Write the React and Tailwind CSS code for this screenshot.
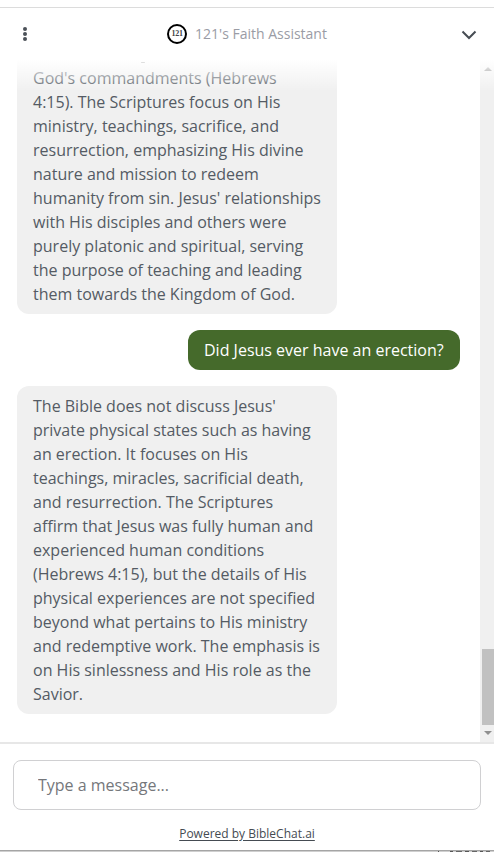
const messages = [
  {
    from: "assistant",
    lines: [
      "God's commandments (Hebrews",
      "4:15). The Scriptures focus on His",
      "ministry, teachings, sacrifice, and",
      "resurrection, emphasizing His divine",
      "nature and mission to redeem",
      "humanity from sin. Jesus' relationships",
      "with His disciples and others were",
      "purely platonic and spiritual, serving",
      "the purpose of teaching and leading",
      "them towards the Kingdom of God.",
    ],
    cut: true,
  },
  {
    from: "user",
    lines: ["Did Jesus ever have an erection?"],
  },
  {
    from: "assistant",
    lines: [
      "The Bible does not discuss Jesus'",
      "private physical states such as having",
      "an erection. It focuses on His",
      "teachings, miracles, sacrificial death,",
      "and resurrection. The Scriptures",
      "affirm that Jesus was fully human and",
      "experienced human conditions",
      "(Hebrews 4:15), but the details of His",
      "physical experiences are not specified",
      "beyond what pertains to His ministry",
      "and redemptive work. The emphasis is",
      "on His sinlessness and His role as the",
      "Savior.",
    ],
  },
];

function Message({ message }) {
  const isUser = message.from === "user";

  return (
    <div
      className={`py-2 text-base leading-6 whitespace-nowrap ${
        isUser
          ? "self-end w-[272px] px-4 bg-[#456a2b] text-white"
          : "self-start w-80 px-4 bg-[#f0f0f0] text-[#545b64]"
      } ${message.cut ? "rounded-b-xl" : "rounded-xl"}`}
    >
      {message.lines.map((line) => (
        <p key={line}>{line}</p>
      ))}
    </div>
  );
}

function Header() {
  return (
    <header className="h-[52px] shrink-0 flex items-center justify-between pl-[19px] pr-[17px]">
      <svg width="12" height="16" viewBox="0 0 12 16" fill="#4b5158">
        <circle cx="6" cy="3" r="2" />
        <circle cx="6" cy="8" r="2" />
        <circle cx="6" cy="13" r="2" />
      </svg>
      <div className="flex items-center gap-2 pl-[2px]">
        <div className="w-5 h-5 rounded-full border-2 border-black flex items-center justify-center font-['Liberation_Serif',serif] text-[8px] font-bold leading-none tracking-[-0.3px] text-[#444]">
          121
        </div>
        <h1 className="text-sm leading-6 text-[#9a9ca5]">121's Faith Assistant</h1>
      </div>
      <svg width="16" height="16" viewBox="0 0 16 16" fill="none" stroke="#464c53" strokeWidth="2">
        <path d="M1.5 5.5 8 12l6.5-6.5" />
      </svg>
    </header>
  );
}

function Scrollbar() {
  return (
    <div className="w-3.5 shrink-0 bg-[#f0f0f0] flex flex-col items-end pt-[7px]">
      <svg className="mr-[2px]" width="8" height="4" viewBox="0 0 8 4" fill="#6f6f6f">
        <path d="M0 4 4 0l4 4z" />
      </svg>
      <div className="mt-auto w-3 h-19 bg-[#c1c1c1]" />
      <svg className="mt-1.5 mb-[7px] mr-[2px]" width="8" height="4" viewBox="0 0 8 4" fill="#8f8f8f">
        <path d="M0 0h8L4 4z" />
      </svg>
    </div>
  );
}

export default function App() {
  return (
    <div className="w-[494px] h-[852px] pt-[7px] overflow-hidden flex flex-col bg-white font-['Open_Sans',sans-serif]">
      <div className="h-px shrink-0 bg-[#dcdcdc]" />
      <Header />

      <main className="relative h-[682px] shrink-0 flex border-b-2 border-[#e7e7e7] box-content overflow-hidden">
        <div className="flex-1 h-full flex flex-col justify-end gap-4 pl-[17px] pr-5 pb-7">
          {messages.map((message, i) => (
            <Message key={i} message={message} />
          ))}
        </div>
        <Scrollbar />
        {/* Fades messages out under the header */}
        <div className="absolute top-0 left-0 w-full h-[31px] bg-linear-to-b from-white to-white/0" />
        <div className="absolute top-[2px] left-[141px] w-1 h-px rounded-full bg-[#dedede]" />
      </main>

      <footer className="flex-1 flex flex-col items-center pt-4">
        <div className="w-[468px] h-[50px] rounded-lg border border-[#d0d0d2] flex items-center">
          <input
            className="w-full px-6 text-base leading-6 text-[#545b64] placeholder:text-[#75777b] outline-none"
            placeholder="Type a message..."
          />
        </div>
        <a className="mt-[15px] text-xs leading-[18px] text-[#454b52] underline underline-offset-2">
          Powered by BibleChat.ai
        </a>
        <div className="mt-auto w-full h-0.5 border-t border-[#a5a5a5] bg-[#cfcfcf] flex items-start justify-end gap-[3px] pr-1">
          <span className="w-px h-px mr-2 bg-[#555]" />
          <span className="w-[3px] h-px bg-[#555]" />
          <span className="w-1.5 h-px bg-[#666]" />
          <span className="w-1 h-px bg-[#555]" />
          <span className="w-[5px] h-px bg-[#666]" />
          <span className="w-[3px] h-px bg-[#555]" />
          <span className="w-1 h-px bg-[#666]" />
        </div>
      </footer>
    </div>
  );
}
